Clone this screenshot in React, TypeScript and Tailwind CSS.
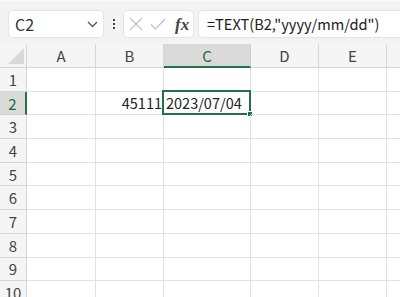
import React from "react";

const cols = [
  { key: "A", w: 69 },
  { key: "B", w: 68 },
  { key: "C", w: 87 },
  { key: "D", w: 68 },
  { key: "E", w: 68 },
  { key: "", w: 40 },
];

const font = { fontFamily: '"Noto Sans CJK JP", "Noto Sans", sans-serif' };

export default function App() {
  const rows = [1, 2, 3, 4, 5, 6, 7, 8, 9, 10];
  return (
    <div className="w-[400px] h-[297px] overflow-hidden bg-white relative" style={font}>
      {/* formula bar */}
      <div className="h-[44px] bg-[#f3f3f3] flex items-start pt-[9px] border-t border-[#fafafa]">
        <div className="ml-[8px] w-[96px] h-[28px] bg-white border border-[#e3e3e3] rounded-[5px] flex items-center justify-between pl-[6px] pr-[5px]">
          <span className="text-[16px] text-[#333] leading-none">C2</span>
          <svg width="11" height="7" viewBox="0 0 11 7" className="mt-[1px]">
            <path d="M1 1 L5.5 5.5 L10 1" fill="none" stroke="#555" strokeWidth="1.3" />
          </svg>
        </div>
        <div className="w-[19px] h-[28px] flex flex-col items-center justify-center gap-[2px]">
          <div className="w-[2px] h-[2px] bg-[#444]" />
          <div className="w-[2px] h-[2px] bg-[#444]" />
          <div className="w-[2px] h-[2px] bg-[#444]" />
        </div>
        <div className="w-[71px] h-[28px] bg-white border border-[#e3e3e3] rounded-[5px] flex items-center pl-[5px]">
          <svg width="14" height="14" viewBox="0 0 14 14">
            <path d="M1 1 L13 13 M13 1 L1 13" stroke="#bdbdbd" strokeWidth="1.1" fill="none" />
          </svg>
          <svg width="16" height="14" viewBox="0 0 16 14" className="ml-[7px]">
            <path d="M1 7.5 L5.5 12 L15 2" stroke="#bdbdbd" strokeWidth="1.1" fill="none" />
          </svg>
          <span
            className="ml-[9px] text-[17px] leading-none italic font-bold text-[#444]"
            style={{ fontFamily: '"Liberation Serif", serif' }}
          >
            fx
          </span>
        </div>
        <div className="ml-[4px] flex-1 h-[28px] bg-white border border-[#e3e3e3] border-r-0 rounded-l-[5px] flex items-center pl-[8px]">
          <span className="text-[14.6px] text-[#222] leading-none whitespace-nowrap">=TEXT(B2,"yyyy/mm/dd")</span>
        </div>
      </div>

      {/* header row */}
      <div className="flex h-[24px] bg-[#f5f5f5]">
        <div className="w-[27px] shrink-0 relative border-r border-b border-[#d6d6d6]">
          <svg width="16" height="16" viewBox="0 0 16 16" className="absolute left-[8px] top-[4px]">
            <path d="M16 0 L16 16 L0 16 Z" fill="#d9d9d9" />
          </svg>
        </div>
        {cols.map((c, i) => {
          const sel = c.key === "C";
          return (
            <div
              key={i}
              style={{ width: c.w }}
              className={
                "shrink-0 flex items-center justify-center text-[15px] leading-none " +
                (sel
                  ? "bg-[#dadada] text-[#1e6b3f] border-r border-[#d0d0d0] border-b-2 border-b-[#217346]"
                  : "text-[#444] border-r border-b border-[#d6d6d6]")
              }
            >
              {c.key}
            </div>
          );
        })}
      </div>

      {/* rows */}
      {rows.map((r) => (
        <div key={r} className="flex h-[23.7px]">
          <div
            className={
              "w-[27px] shrink-0 flex items-center justify-center text-[15px] leading-none border-b " +
              (r === 2
                ? "bg-[#dadada] text-[#1e6b3f] border-r-2 border-r-[#217346] border-b-[#d0d0d0]"
                : "bg-[#f5f5f5] text-[#444] border-r border-[#d6d6d6]")
            }
          >
            {r}
          </div>
          {cols.map((c, i) => {
            const isB2 = r === 2 && c.key === "B";
            const isC2 = r === 2 && c.key === "C";
            return (
              <div
                key={i}
                style={{ width: c.w }}
                className="shrink-0 relative border-r border-b border-[#e1e1e1] flex items-center text-[14.5px] leading-none text-[#222]"
              >
                {isB2 && <span className="ml-auto mr-[1px]">45111</span>}
                {isC2 && (
                  <>
                    <span className="ml-[2px]">2023/07/04</span>
                    <div className="absolute left-[-2px] top-[-2px] right-[-1px] bottom-[-1px] border-2 border-[#217346]" />
                    <div className="absolute right-[-3px] bottom-[-3px] w-[6px] h-[6px] bg-[#217346] border border-white" />
                  </>
                )}
              </div>
            );
          })}
        </div>
      ))}
    </div>
  );
}
